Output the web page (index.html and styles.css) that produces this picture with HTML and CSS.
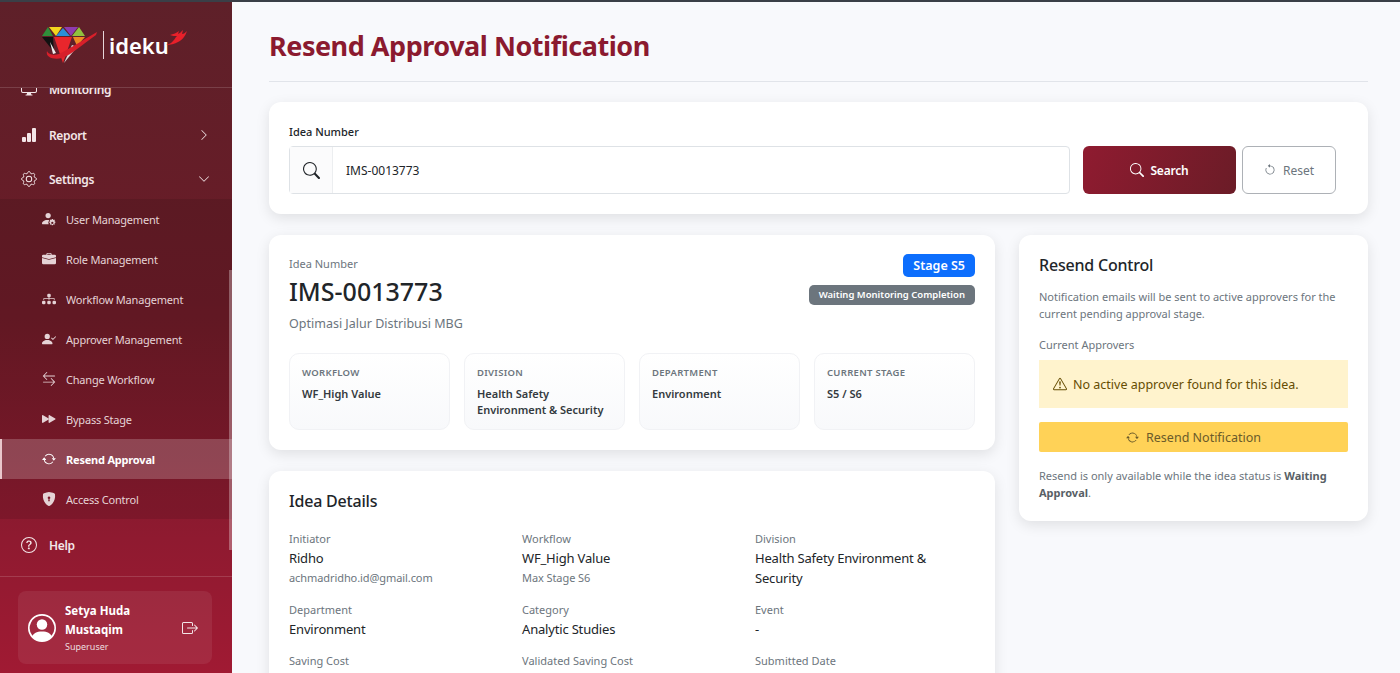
FILE: index.html
```html
<!DOCTYPE html>
<html lang="en">
<head>
  <meta charset="UTF-8">
  <title>Resend Approval Notification</title>
  <link rel="stylesheet" href="styles.css">
</head>
<body>
  <svg class="sprite" xmlns="http://www.w3.org/2000/svg">
    <symbol id="i-display" viewBox="0 0 16 16"><path fill-rule="evenodd" d="M0 4s0-2 2-2h12s2 0 2 2v6s0 2-2 2h-4c0 .667.083 1.167.25 1.5H11a.5.5 0 0 1 0 1H5a.5.5 0 0 1 0-1h.75c.167-.333.25-.833.25-1.5H2s-2 0-2-2V4zm1.398-.855a.758.758 0 0 0-.254.302A1.46 1.46 0 0 0 1 4.01V10c0 .325.078.502.145.602.07.105.17.188.302.254a1.464 1.464 0 0 0 .538.143L2.01 11H14c.325 0 .502-.078.602-.145a.758.758 0 0 0 .254-.302 1.464 1.464 0 0 0 .143-.538L15 9.99V4c0-.325-.078-.502-.145-.602a.757.757 0 0 0-.302-.254A1.46 1.46 0 0 0 13.99 3H2c-.325 0-.502.078-.602.145z"/></symbol>
    <symbol id="i-bars" viewBox="0 0 16 16"><path d="M1 11a1 1 0 0 1 1-1h2a1 1 0 0 1 1 1v3a1 1 0 0 1-1 1H2a1 1 0 0 1-1-1v-3zm5-4a1 1 0 0 1 1-1h2a1 1 0 0 1 1 1v7a1 1 0 0 1-1 1H7a1 1 0 0 1-1-1V7zm5-5a1 1 0 0 1 1-1h2a1 1 0 0 1 1 1v12a1 1 0 0 1-1 1h-2a1 1 0 0 1-1-1V2z"/></symbol>
    <symbol id="i-gear" viewBox="0 0 16 16"><path d="M8 4.754a3.246 3.246 0 1 0 0 6.492 3.246 3.246 0 0 0 0-6.492zM5.754 8a2.246 2.246 0 1 1 4.492 0 2.246 2.246 0 0 1-4.492 0z"/><path fill="none" stroke="currentColor" stroke-width="1" d="M9.3 1.5c-.37-1.25-2.23-1.25-2.6 0l-.1.33a1.37 1.37 0 0 1-1.97.82l-.3-.17c-1.15-.62-2.46.69-1.84 1.84l.17.3a1.37 1.37 0 0 1-.82 1.97l-.33.1c-1.25.37-1.25 2.23 0 2.6l.33.1a1.37 1.37 0 0 1 .82 1.97l-.17.3c-.62 1.15.69 2.46 1.84 1.84l.3-.17a1.37 1.37 0 0 1 1.97.82l.1.33c.37 1.25 2.23 1.25 2.6 0l.1-.33a1.37 1.37 0 0 1 1.97-.82l.3.17c1.15.62 2.46-.69 1.84-1.84l-.17-.3a1.37 1.37 0 0 1 .82-1.97l.33-.1c1.25-.37 1.25-2.23 0-2.6l-.33-.1a1.37 1.37 0 0 1-.82-1.97l.17-.3c.62-1.15-.69-2.46-1.84-1.84l-.3.17a1.37 1.37 0 0 1-1.97-.82z"/></symbol>
    <symbol id="i-help" viewBox="0 0 16 16"><path d="M8 15A7 7 0 1 1 8 1a7 7 0 0 1 0 14zm0 1A8 8 0 1 0 8 0a8 8 0 0 0 0 16z"/><path d="M5.255 5.786a.237.237 0 0 0 .241.247h.825c.138 0 .248-.113.266-.25.09-.656.54-1.134 1.342-1.134.686 0 1.314.343 1.314 1.168 0 .635-.374.927-.965 1.371-.673.489-1.206 1.06-1.168 1.987l.003.217a.25.25 0 0 0 .25.246h.811a.25.25 0 0 0 .25-.25v-.105c0-.718.273-.927 1.01-1.486.609-.463 1.244-.977 1.244-2.056 0-1.511-1.276-2.241-2.673-2.241-1.267 0-2.655.59-2.75 2.286zm1.557 5.763c0 .533.425.927 1.01.927.609 0 1.028-.394 1.028-.927 0-.552-.42-.94-1.029-.94-.584 0-1.009.388-1.009.94z"/></symbol>
    <symbol id="i-right" viewBox="0 0 16 16"><path fill-rule="evenodd" d="M4.646 1.646a.5.5 0 0 1 .708 0l6 6a.5.5 0 0 1 0 .708l-6 6a.5.5 0 0 1-.708-.708L10.293 8 4.646 2.354a.5.5 0 0 1 0-.708z"/></symbol>
    <symbol id="i-down" viewBox="0 0 16 16"><path fill-rule="evenodd" d="M1.646 4.646a.5.5 0 0 1 .708 0L8 10.293l5.646-5.647a.5.5 0 0 1 .708.708l-6 6a.5.5 0 0 1-.708 0l-6-6a.5.5 0 0 1 0-.708z"/></symbol>
    <symbol id="i-user-gear" viewBox="0 0 16 16"><path d="M7 7a3 3 0 1 0 0-6 3 3 0 0 0 0 6z"/><path d="M1 14s-1 0-1-1 1.2-4 6-4c.9 0 1.6.1 2.3.3A4.5 4.5 0 0 0 7.600 14H1z"/><path fill-rule="evenodd" d="M12.400 8l.4 1.100 1.100-.4.8.8-.5 1.100 1.100.5v1.100l-1.100.5.5 1.100-.8.8-1.100-.5-.4 1.100h-1.200l-.4-1.100-1.100.5-.8-.8.5-1.100-1.100-.5v-1.100l1.100-.5-.5-1.100.8-.8 1.100.4.400-1.100h1.200zm-.6 3.200a1.300 1.300 0 1 0 0 2.600 1.300 1.300 0 0 0 0-2.600z"/></symbol>
    <symbol id="i-case" viewBox="0 0 16 16"><path d="M6.500 1A1.500 1.500 0 0 0 5 2.500V3H1.500A1.500 1.500 0 0 0 0 4.500v1.384l7.614 2.030a1.500 1.500 0 0 0 .772 0L16 5.884V4.500A1.500 1.500 0 0 0 14.500 3H11v-.5A1.500 1.500 0 0 0 9.500 1h-3zm0 1h3a.5.5 0 0 1 .5.5V3H6v-.5a.5.5 0 0 1 .5-.5z"/><path d="M0 12.500A1.500 1.500 0 0 0 1.500 14h13a1.500 1.500 0 0 0 1.500-1.500V6.850L8.129 8.947a.5.5 0 0 1-.258 0L0 6.850v5.650z"/></symbol>
    <symbol id="i-tree" viewBox="0 0 16 16"><path d="M6 3.500A1.500 1.500 0 0 1 7.500 2h1A1.500 1.500 0 0 1 10 3.500v1A1.500 1.500 0 0 1 8.500 6v1H14a.5.5 0 0 1 .5.5v1a.5.5 0 0 1-1 0V8h-5v.5a.5.5 0 0 1-1 0V8h-5v.5a.5.5 0 0 1-1 0v-1A.5.5 0 0 1 2 7h5.500V6A1.500 1.500 0 0 1 6 4.500v-1zm-6 8A1.500 1.500 0 0 1 1.500 10h1A1.500 1.500 0 0 1 4 11.500v1A1.500 1.500 0 0 1 2.500 14h-1A1.500 1.500 0 0 1 0 12.500v-1zm6 0A1.500 1.500 0 0 1 7.500 10h1a1.500 1.500 0 0 1 1.500 1.500v1A1.500 1.500 0 0 1 8.500 14h-1A1.500 1.500 0 0 1 6 12.500v-1zm6 0a1.500 1.500 0 0 1 1.500-1.500h1a1.500 1.500 0 0 1 1.500 1.500v1a1.500 1.500 0 0 1-1.500 1.500h-1a1.500 1.500 0 0 1-1.500-1.500v-1z"/></symbol>
    <symbol id="i-user-check" viewBox="0 0 16 16"><path fill-rule="evenodd" d="M15.854 5.146a.5.5 0 0 1 0 .708l-3 3a.5.5 0 0 1-.708 0l-1.500-1.500a.5.5 0 0 1 .708-.708L12.500 7.793l2.646-2.647a.5.5 0 0 1 .708 0z"/><path d="M1 14s-1 0-1-1 1-4 6-4 6 3 6 4-1 1-1 1H1zm5-6a3 3 0 1 0 0-6 3 3 0 0 0 0 6z"/></symbol>
    <symbol id="i-swap" viewBox="0 0 16 16"><path fill-rule="evenodd" d="M1 11.500a.5.5 0 0 0 .5.5h11.793l-3.147 3.146a.5.5 0 0 0 .708.708l4-4a.5.5 0 0 0 0-.708l-4-4a.5.5 0 0 0-.708.708L13.293 11H1.500a.5.5 0 0 0-.5.5zm14-7a.5.5 0 0 1-.5.5H2.707l3.147 3.146a.5.5 0 1 1-.708.708l-4-4a.5.5 0 0 1 0-.708l4-4a.5.5 0 1 1 .708.708L2.707 4H14.500a.5.5 0 0 1 .5.5z"/></symbol>
    <symbol id="i-forward" viewBox="0 0 16 16"><path d="M7.596 7.304a.802.802 0 0 1 0 1.392l-6.363 3.692C.713 12.690 0 12.345 0 11.692V4.308c0-.653.713-.998 1.233-.696l6.363 3.692z"/><path d="M15.096 7.304a.802.802 0 0 1 0 1.392l-6.363 3.692c-.52.302-1.233-.043-1.233-.696V4.308c0-.653.713-.998 1.233-.696l6.363 3.692z"/></symbol>
    <symbol id="i-repeat" viewBox="0 0 16 16"><path d="M11.534 7h3.932a.25.25 0 0 1 .192.41l-1.966 2.360a.25.25 0 0 1-.384 0l-1.966-2.360a.25.25 0 0 1 .192-.41zm-11 2h3.932a.25.25 0 0 0 .192-.41L2.692 6.230a.25.25 0 0 0-.384 0L.342 8.590A.25.25 0 0 0 .534 9z"/><path fill-rule="evenodd" d="M8 3c-1.552 0-2.940.707-3.857 1.818a.5.5 0 1 1-.771-.636A6.002 6.002 0 0 1 13.917 7H12.900A5.002 5.002 0 0 0 8 3zM3.100 9a5.002 5.002 0 0 0 8.757 2.182.5.5 0 1 1 .771.636A6.002 6.002 0 0 1 2.083 9H3.100z"/></symbol>
    <symbol id="i-shield" viewBox="0 0 16 16"><path fill-rule="evenodd" d="M8 0c-.69 0-1.843.265-2.928.56-1.110.3-2.229.655-2.887.87a1.540 1.540 0 0 0-1.044 1.262c-.596 4.477.787 7.795 2.465 9.990a11.777 11.777 0 0 0 2.517 2.453c.386.273.744.482 1.048.625.28.132.581.24.829.24s.548-.108.829-.24a7.159 7.159 0 0 0 1.048-.625 11.775 11.775 0 0 0 2.517-2.453c1.678-2.195 3.061-5.513 2.465-9.990a1.541 1.541 0 0 0-1.044-1.263 62.467 62.467 0 0 0-2.887-.87C9.843.266 8.690 0 8 0zm0 5a1.500 1.500 0 0 1 .5 2.915l.385 1.990a.5.5 0 0 1-.491.595h-.788a.5.5 0 0 1-.49-.595l.384-1.990A1.500 1.500 0 0 1 8 5z"/></symbol>
    <symbol id="i-person" viewBox="0 0 16 16"><path d="M11 6a3 3 0 1 1-6 0 3 3 0 0 1 6 0z"/><path fill-rule="evenodd" d="M0 8a8 8 0 1 1 16 0A8 8 0 0 1 0 8zm8-7a7 7 0 0 0-5.468 11.370C3.242 11.226 4.805 10 8 10s4.757 1.225 5.468 2.370A7 7 0 0 0 8 1z"/></symbol>
    <symbol id="i-logout" viewBox="0 0 16 16"><path fill-rule="evenodd" d="M10 12.500a.5.5 0 0 1-.5.5h-8a.5.5 0 0 1-.5-.5v-9a.5.5 0 0 1 .5-.5h8a.5.5 0 0 1 .5.5v2a.5.5 0 0 0 1 0v-2A1.500 1.500 0 0 0 9.500 2h-8A1.500 1.500 0 0 0 0 3.500v9A1.500 1.500 0 0 0 1.500 14h8a1.500 1.500 0 0 0 1.500-1.500v-2a.5.5 0 0 0-1 0v2z"/><path fill-rule="evenodd" d="M15.854 8.354a.5.5 0 0 0 0-.708l-3-3a.5.5 0 0 0-.708.708L14.293 7.500H5.500a.5.5 0 0 0 0 1h8.793l-2.147 2.146a.5.5 0 0 0 .708.708l3-3z"/></symbol>
    <symbol id="i-search" viewBox="0 0 16 16"><path d="M11.742 10.344a6.500 6.500 0 1 0-1.397 1.398h-.001c.03.04.062.078.098.115l3.850 3.850a1 1 0 0 0 1.415-1.414l-3.850-3.850a1.007 1.007 0 0 0-.115-.1zM12 6.500a5.500 5.500 0 1 1-11 0 5.500 5.500 0 0 1 11 0z"/></symbol>
    <symbol id="i-reset" viewBox="0 0 16 16"><path fill-rule="evenodd" d="M8 3a5 5 0 1 0 4.546 2.914.5.5 0 0 1 .908-.417A6 6 0 1 1 8 2v1z"/><path d="M8 4.466V.534a.25.25 0 0 1 .41-.192l2.360 1.966c.12.1.12.284 0 .384L8.410 4.658A.25.25 0 0 1 8 4.466z"/></symbol>
    <symbol id="i-warn" viewBox="0 0 16 16"><path d="M7.938 2.016A.13.13 0 0 1 8.002 2a.13.13 0 0 1 .063.016.146.146 0 0 1 .054.057l6.857 11.667c.036.06.035.124.002.183a.163.163 0 0 1-.054.06.116.116 0 0 1-.066.017H1.146a.115.115 0 0 1-.066-.017.163.163 0 0 1-.054-.06.176.176 0 0 1 .002-.183L7.884 2.073a.147.147 0 0 1 .054-.057zm1.044-.45a1.130 1.130 0 0 0-1.960 0L.165 13.233c-.457.778.091 1.767.98 1.767h13.713c.889 0 1.438-.99.98-1.767L8.982 1.566z"/><path d="M7.002 12a1 1 0 1 1 2 0 1 1 0 0 1-2 0zM7.100 5.995a.905.905 0 1 1 1.800 0l-.35 3.507a.552.552 0 0 1-1.100 0L7.100 5.995z"/></symbol>
  </svg>

  <div class="topline"></div>

  <div class="app">
    <aside class="sidebar">
      <div class="brand">
        <svg class="gem" viewBox="0 0 58 40" xmlns="http://www.w3.org/2000/svg">
          <polygon points="1,11 7,2 12,11" fill="#2f8f3a"/>
          <polygon points="8,2 21,2 15,11" fill="#f2d61e"/>
          <polygon points="15,11 22,3 29,11" fill="#2a8fd8"/>
          <polygon points="23,2 37,2 30,11" fill="#8e3bb0"/>
          <polygon points="31,11 38,2 44,11" fill="#8fc23e"/>
          <polygon points="1,12 12,12 13,27" fill="#111"/>
          <polygon points="13,12 31,12 22,38" fill="#e8262c"/>
          <polygon points="32,12 44,12 36,21" fill="#f08a24"/>
          <polygon points="31,20 36,22 23,38" fill="#ddd"/>
          <polygon points="9,17 15,28 12,29" fill="#eee"/>
          <path d="M6 26c1 3 7 5 12 3 7-3 22-13 38-22l-1 3C42 19 30 30 21 33c-7 2-17 0-15-7z" fill="#d81f2a"/>
        </svg>
        <span class="brand-rule"></span>
        <span class="brand-name">ideku</span>
        <svg class="flame" viewBox="0 0 22 16" xmlns="http://www.w3.org/2000/svg">
          <path d="M0 15c4 0 9-1 12-3 4-2 7-5 9-11-2 2-3 3-5 3l1-4c-2 2-3 3-5 4l1-3c-2 2-6 3-9 4 2 1 5 1 7 1-2 2-2 3-4 5-1 2-4 3-7 4z" fill="#e8202a"/>
        </svg>
      </div>

      <nav class="menu">
        <div class="menu-inner">
          <a class="item item-first"><svg class="ico"><use href="#i-display"/></svg>Monitoring</a>
          <a class="item"><svg class="ico"><use href="#i-bars"/></svg>Report<svg class="caret"><use href="#i-right"/></svg></a>
          <a class="item item-settings"><svg class="ico"><use href="#i-gear"/></svg>Settings<svg class="caret"><use href="#i-down"/></svg></a>
          <div class="submenu">
            <a class="subitem"><svg class="subico"><use href="#i-user-gear"/></svg>User Management</a>
            <a class="subitem"><svg class="subico"><use href="#i-case"/></svg>Role Management</a>
            <a class="subitem"><svg class="subico"><use href="#i-tree"/></svg>Workflow Management</a>
            <a class="subitem"><svg class="subico"><use href="#i-user-check"/></svg>Approver Management</a>
            <a class="subitem"><svg class="subico"><use href="#i-swap"/></svg>Change Workflow</a>
            <a class="subitem"><svg class="subico"><use href="#i-forward"/></svg>Bypass Stage</a>
            <a class="subitem active"><svg class="subico"><use href="#i-repeat"/></svg>Resend Approval</a>
            <a class="subitem"><svg class="subico"><use href="#i-shield"/></svg>Access Control</a>
          </div>
          <a class="item item-help"><svg class="ico"><use href="#i-help"/></svg>Help</a>
        </div>
        <span class="thumb"></span>
      </nav>

      <div class="side-foot">
        <div class="user-card">
          <svg class="avatar"><use href="#i-person"/></svg>
          <div class="user-info">
            <div class="user-name">Setya Huda Mustaqim</div>
            <div class="user-role">Superuser</div>
          </div>
          <svg class="logout"><use href="#i-logout"/></svg>
        </div>
      </div>
    </aside>

    <main class="content">
      <header class="page-head">
        <h1>Resend Approval Notification</h1>
      </header>

      <section class="card search-card">
        <label class="search-label">Idea Number</label>
        <div class="search-row">
          <div class="input-group">
            <span class="addon"><svg><use href="#i-search"/></svg></span>
            <span class="input-value">IMS-0013773</span>
          </div>
          <button class="btn-search"><svg><use href="#i-search"/></svg>Search</button>
          <button class="btn-reset"><svg><use href="#i-reset"/></svg>Reset</button>
        </div>
      </section>

      <div class="columns">
        <div class="col-left">
          <section class="card summary">
            <div class="summary-top">
              <div>
                <div class="muted-label">Idea Number</div>
                <div class="idea-no">IMS-0013773</div>
                <div class="idea-title">Optimasi Jalur Distribusi MBG</div>
              </div>
              <div class="badges">
                <span class="badge-stage">Stage S5</span>
                <span class="badge-status">Waiting Monitoring Completion</span>
              </div>
            </div>
            <div class="tiles">
              <div class="tile"><div class="tile-label">Workflow</div><div class="tile-value">WF_High Value</div></div>
              <div class="tile"><div class="tile-label">Division</div><div class="tile-value">Health Safety Environment &amp; Security</div></div>
              <div class="tile"><div class="tile-label">Department</div><div class="tile-value">Environment</div></div>
              <div class="tile"><div class="tile-label">Current Stage</div><div class="tile-value">S5 / S6</div></div>
            </div>
          </section>

          <section class="card details">
            <h2>Idea Details</h2>
            <div class="detail-grid">
              <div><div class="d-label">Initiator</div><div class="d-value">Ridho</div><div class="d-sub">achmadridho.id@gmail.com</div></div>
              <div><div class="d-label">Workflow</div><div class="d-value">WF_High Value</div><div class="d-sub">Max Stage S6</div></div>
              <div><div class="d-label">Division</div><div class="d-value">Health Safety Environment &amp; Security</div></div>
              <div><div class="d-label">Department</div><div class="d-value">Environment</div></div>
              <div><div class="d-label">Category</div><div class="d-value">Analytic Studies</div></div>
              <div><div class="d-label">Event</div><div class="d-value">-</div></div>
              <div><div class="d-label">Saving Cost</div></div>
              <div><div class="d-label">Validated Saving Cost</div></div>
              <div><div class="d-label">Submitted Date</div></div>
            </div>
          </section>
        </div>

        <section class="card control">
          <h2>Resend Control</h2>
          <p class="control-text">Notification emails will be sent to active approvers for the current pending approval stage.</p>
          <div class="control-label">Current Approvers</div>
          <div class="alert"><svg><use href="#i-warn"/></svg>No active approver found for this idea.</div>
          <button class="btn-resend"><svg><use href="#i-repeat"/></svg>Resend Notification</button>
          <p class="control-note">Resend is only available while the idea status is <strong>Waiting Approval</strong>.</p>
        </section>
      </div>
    </main>
  </div>
</body>
</html>
```

FILE: styles.css
```css
* {
  box-sizing: border-box;
}

html, body {
  height: 100%;
}

body {
  margin: 0;
  overflow: hidden;
  background: #f8f9fc;
  color: #212529;
  font-family: "Noto Sans", Arial, sans-serif;
}

.sprite {
  display: none;
}

.topline {
  height: 2px;
  background: #3a3f47;
}

.app {
  display: flex;
  height: 671px;
}

/* sidebar */
.sidebar {
  display: flex;
  flex-direction: column;
  flex: 0 0 232px;
  background: linear-gradient(180deg, #5e2029 0%, #6b1b27 45%, #8f1a30 80%, #a01a33 100%);
  color: #fff;
}

.brand {
  display: flex;
  align-items: center;
  flex: 0 0 86px;
  padding-left: 41px;
  border-bottom: 1px solid rgba(255, 255, 255, 0.15);
}

.gem {
  width: 58px;
  height: 40px;
  margin-top: 1px;
}

.brand-rule {
  width: 1px;
  height: 28px;
  margin: 0 5px 0 4px;
  background: #e6d5d8;
}

.brand-name {
  font-size: 22px;
  font-weight: 600;
  line-height: 1;
}

.flame {
  width: 22px;
  height: 16px;
  margin: -14px 0 0 -3px;
}

.menu {
  position: relative;
  flex: 0 0 489px;
  overflow: hidden;
  border-bottom: 1px solid rgba(255, 255, 255, 0.15);
}

.menu-inner {
  margin-top: -21px;
}

.thumb {
  position: absolute;
  top: 182px;
  right: 0;
  width: 3px;
  height: 280px;
  background: rgba(255, 255, 255, 0.3);
}

.item {
  display: flex;
  align-items: center;
  height: 44px;
  padding-left: 21px;
  font-size: 12px;
  font-weight: 600;
  letter-spacing: -0.35px;
  color: #f3e6e8;
}

.item-first {
  margin-bottom: 2px;
}

.item-settings {
  height: 42px;
  padding-top: 2px;
}

.item-help {
  margin-top: 4px;
}

.ico {
  width: 16px;
  height: 16px;
  margin-right: 12px;
  fill: currentColor;
}

.caret {
  width: 12px;
  height: 12px;
  margin-left: auto;
  margin-right: 22px;
  fill: currentColor;
}

.submenu {
  background: rgba(0, 0, 0, 0.1);
}

.subitem {
  display: flex;
  align-items: center;
  height: 40px;
  padding-left: 42px;
  font-size: 11px;
  letter-spacing: -0.2px;
  color: #e5d3d6;
}

.subico {
  width: 14px;
  height: 14px;
  margin-right: 10px;
  fill: currentColor;
}

.subitem.active {
  background: rgba(255, 255, 255, 0.2);
  border-left: 2px solid #e9c7cc;
  padding-left: 40px;
  font-weight: 700;
  color: #fff;
}

.side-foot {
  padding: 14px 20px 0 18px;
}

.user-card {
  display: flex;
  align-items: center;
  height: 73px;
  padding: 0 14px 0 10px;
  border-radius: 8px;
  background: rgba(255, 255, 255, 0.07);
}

.avatar {
  width: 28px;
  height: 28px;
  margin-right: 9px;
  fill: #fff;
  flex: none;
}

.user-info {
  flex: 1;
  margin-top: -2px;
}

.user-name {
  font-size: 11.5px;
  font-weight: 700;
  line-height: 19px;
}

.user-role {
  margin-top: 1px;
  font-size: 9px;
  color: #ecdcdf;
}

.logout {
  width: 16px;
  height: 16px;
  fill: #f3e6e8;
  flex: none;
}

/* main */
.content {
  flex: 1;
  min-width: 0;
  padding: 0 32px 0 37px;
}

.page-head {
  height: 80px;
  padding-top: 26px;
  border-bottom: 1px solid #e1e4ea;
}

h1 {
  margin: 0;
  font-size: 27px;
  line-height: 36px;
  font-weight: 700;
  letter-spacing: -0.47px;
  color: #8b1a2f;
}

.card {
  background: #fff;
  border-radius: 12px;
  box-shadow: 0 4px 14px rgba(0, 0, 0, 0.1);
}

.search-card {
  height: 112px;
  margin-top: 20px;
  padding: 22px 32px 0 20px;
}

.search-label {
  display: block;
  height: 22px;
  font-size: 11px;
  line-height: 16px;
  font-weight: 500;
}

.search-row {
  display: flex;
  height: 48px;
}

.input-group {
  display: flex;
  align-items: center;
  flex: 1;
  border: 1px solid #dee2e6;
  border-radius: 4px;
}

.addon {
  display: flex;
  align-items: center;
  justify-content: center;
  width: 43px;
  height: 100%;
  background: #fbfbfc;
  border-right: 1px solid #eceef0;
}

.addon svg {
  width: 17px;
  height: 17px;
  fill: #212529;
}

.input-value {
  padding-left: 13px;
  font-size: 12px;
}

.btn-search,
.btn-reset {
  display: flex;
  align-items: center;
  justify-content: center;
  height: 48px;
  border-radius: 6px;
  font-family: inherit;
  font-size: 12px;
}

.btn-search {
  width: 153px;
  margin-left: 13px;
  border: none;
  background: linear-gradient(110deg, #8f1b30, #6b1c27);
  color: #fff;
  font-weight: 600;
  letter-spacing: -0.2px;
}

.btn-search svg {
  width: 14px;
  height: 14px;
  margin-right: 6px;
  fill: #fff;
}

.btn-reset {
  width: 94px;
  margin-left: 6px;
  border: 1px solid #adb1b6;
  background: #fff;
  color: #6c757d;
}

.btn-reset svg {
  width: 12px;
  height: 12px;
  margin-right: 7px;
  fill: #6c757d;
  transform: scaleX(-1);
}

.columns {
  display: flex;
  align-items: flex-start;
  gap: 24px;
  margin-top: 21px;
}

.col-left {
  flex: 0 0 726px;
}

.summary {
  height: 215px;
  padding: 19px 20px 0;
}

.summary-top {
  display: flex;
  justify-content: space-between;
  height: 99px;
}

.muted-label {
  margin-top: 2px;
  font-size: 11px;
  line-height: 16px;
  color: #6c757d;
}

.idea-no {
  margin-top: 2px;
  font-size: 25px;
  line-height: 34px;
  font-weight: 500;
}

.idea-title {
  margin-top: 6px;
  font-size: 12.5px;
  line-height: 20px;
  color: #6c757d;
}

.badges {
  display: flex;
  flex-direction: column;
  align-items: flex-end;
  gap: 8px;
}

.badge-stage {
  height: 23px;
  padding: 0 10px;
  border-radius: 5px;
  background: #0d6efd;
  color: #fff;
  font-size: 12.5px;
  line-height: 23px;
  font-weight: 600;
}

.badge-status {
  height: 20px;
  padding: 0 10px;
  border-radius: 5px;
  background: #6c757d;
  color: #fff;
  font-size: 9.5px;
  line-height: 20px;
  font-weight: 600;
}

.tiles {
  display: grid;
  grid-template-columns: repeat(4, 1fr);
  gap: 14px;
}

.tile {
  height: 77px;
  padding: 12px 12px 0;
  border: 1px solid #f1f2f5;
  border-radius: 10px;
  background: linear-gradient(180deg, #fff, #f8f9fb);
}

.tile-label {
  font-size: 9.5px;
  line-height: 14px;
  font-weight: 600;
  color: #6c757d;
  text-transform: uppercase;
  letter-spacing: 0.3px;
}

.tile-value {
  margin-top: 6px;
  font-size: 11px;
  line-height: 16px;
  font-weight: 600;
  color: #343a40;
}

.details {
  margin-top: 21px;
  height: 260px;
  padding: 18px 20px 0;
}

h2 {
  margin: 0;
  font-size: 16px;
  line-height: 24px;
  font-weight: 500;
  letter-spacing: -0.2px;
}

.detail-grid {
  display: grid;
  grid-template-columns: 233px 233px 220px;
  grid-template-rows: 71px 51px auto;
  margin-top: 18px;
}

.d-label {
  font-size: 11px;
  line-height: 16px;
  color: #6c757d;
}

.d-value {
  margin-top: 1px;
  font-size: 13px;
  line-height: 20px;
  letter-spacing: -0.18px;
}

.d-sub {
  margin-top: 1px;
  font-size: 11px;
  line-height: 18px;
  letter-spacing: -0.08px;
  color: #6c757d;
}

.control {
  flex: 1;
  height: 286px;
  padding: 18px 20px 0;
}

.control-text,
.control-note {
  margin: 0;
  font-size: 11px;
  line-height: 17px;
  color: #6c757d;
}

.control-text {
  margin-top: 11px;
}

.control-label {
  margin-top: 14px;
  font-size: 11px;
  line-height: 17px;
  color: #6c757d;
}

.alert {
  display: flex;
  align-items: center;
  height: 48px;
  margin-top: 7px;
  padding-left: 14px;
  background: #fff3cd;
  color: #664d03;
  font-size: 12.5px;
}

.alert svg {
  width: 14px;
  height: 14px;
  margin-right: 6px;
  fill: currentColor;
}

.btn-resend {
  display: flex;
  align-items: center;
  justify-content: center;
  width: 100%;
  height: 30px;
  margin-top: 14px;
  border: none;
  border-radius: 2px;
  background: #ffd257;
  color: #6b5b2a;
  font-family: inherit;
  font-size: 12.5px;
}

.btn-resend svg {
  width: 13px;
  height: 13px;
  margin-right: 7px;
  fill: currentColor;
}

.control-note {
  margin-top: 15px;
}

.control-note strong {
  color: #585f66;
}
```
